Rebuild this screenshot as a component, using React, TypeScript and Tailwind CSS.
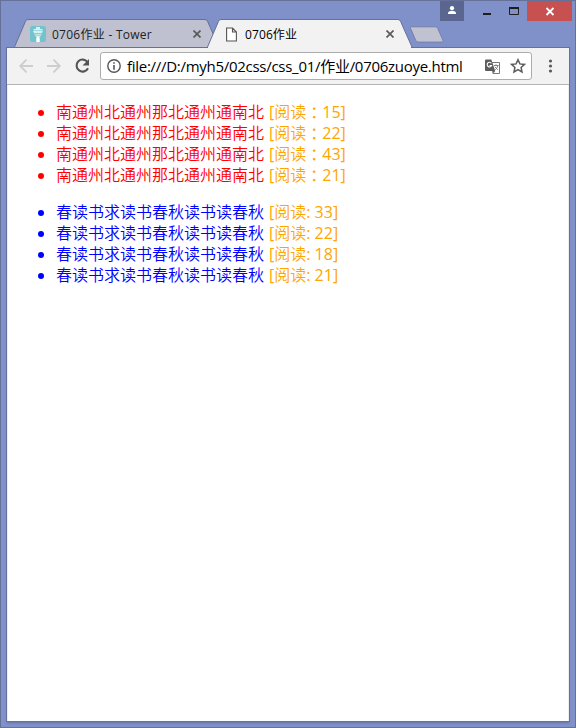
import React from "react";

const UI_FONT = "font-['Open_Sans','Noto_Sans_CJK_SC',sans-serif]";

type Item = { title: string; count: string };

const redItems: Item[] = ["15", "22", "43", "21"].map((count) => ({
  title: "南通州北通州那北通州通南北",
  count,
}));

const blueItems: Item[] = ["33", "22", "18", "21"].map((count) => ({
  title: "春读书求读书春秋读书读春秋",
  count,
}));

function WindowControls() {
  return (
    <div className="flex h-[18px] shrink-0 items-start justify-end pr-[3px]">
      <div className="flex h-5 w-6 shrink-0 justify-center bg-[#5a6690]">
        <svg width="24" height="20" viewBox="0 0 24 20" fill="#fff">
          <circle cx="12" cy="7.2" r="2.1" />
          <path d="M8 13v-1.2c0-1.3 2.6-2 4-2s4 .7 4 2V13z" />
        </svg>
      </div>
      <svg className="shrink-0" width="63" height="20" viewBox="0 0 63 20">
        <path d="M19 12h8v2h-8z" fill="#1e1e1e" />
        <path d="M45.5 7v6.5h9V7z" fill="none" stroke="#1e1e1e" />
        <path d="M45 6h10v2H45z" fill="#1e1e1e" />
      </svg>
      <div className="h-5 w-[45px] shrink-0 bg-[#c75050]">
        <svg width="45" height="20" viewBox="0 0 45 20">
          <path d="M19.500 7l7 7M26.500 7l-7 7" stroke="#fff" strokeWidth="1.800" />
        </svg>
      </div>
    </div>
  );
}

function CloseIcon() {
  return (
    <svg width="8" height="8" viewBox="0 0 8 8">
      <path d="M.5.5l7 7M7.500.5l-7 7" stroke="#5a5a5a" strokeWidth="1.700" />
    </svg>
  );
}

function TabShape({ active }: { active?: boolean }) {
  return (
    <svg className="absolute inset-0" width="206" height="29" viewBox="0 0 206 29">
      <path
        d="M.3 28.500L11.500 2.300Q12.300 .5 14 .5H191Q192.600 .5 193.500 2.300L205.200 28.500"
        fill={active ? "#f2f2f2" : "#c0c1d0"}
        stroke="#667098"
      />
      {active && <path d="M1 28h204v1H1z" fill="#f2f2f2" />}
    </svg>
  );
}

function TabStrip() {
  return (
    <div className={`flex h-[29px] shrink-0 pl-[13px] text-[12px] leading-[29px] text-[#222] ${UI_FONT}`}>
      <div className="relative h-[29px] w-[206px] shrink-0">
        <TabShape />
        <div className="relative flex h-[30px] items-center pl-4">
          <svg width="16" height="16" viewBox="0 0 16 16">
            <rect width="16" height="16" rx="2.500" fill="#72c3cb" />
            <path d="M6 1h4v2H6zM3.500 3h9v1.500h-9zM3 5h10l-1 2H4zM4 7.700h8l-.8 1.100H4.800zM5 9.500h6L10 11H6zM6 11.500h4V16H6z" fill="#d4f0f1" />
            <path d="M7 11h2v5H7z" fill="#fff" />
          </svg>
          <span className="ml-[6px] w-[141px] whitespace-nowrap tracking-[0.26px]">0706作业 - Tower</span>
          <CloseIcon />
        </div>
      </div>
      <div className="relative -ml-[13px] h-[29px] w-[206px] shrink-0">
        <TabShape active />
        <div className="relative flex h-[30px] items-center pl-[19px]">
          <svg width="11" height="15" viewBox="0 0 11 15" fill="#fff" stroke="#555" strokeWidth="1.100">
            <path d="M.6 1h5.900l3.900 4v9H.6zM6.500 1v4h3.900" />
          </svg>
          <span className="ml-2 w-[141px] whitespace-nowrap text-black tracking-[0.1px]">0706作业</span>
          <CloseIcon />
        </div>
      </div>
      <svg className="-ml-[5px] mt-[7px] shrink-0" width="37" height="17" viewBox="0 0 37 17">
        <path
          d="M3.500 .8h24q1.500 0 2.200 1.500l5.300 12q.7 1.800-1 1.800H10.500q-2 0-2.800-1.800l-5.200-12Q2 .8 3.500 .8z"
          fill="#c0c2d2"
          stroke="#7480ad"
        />
      </svg>
    </div>
  );
}

function TranslateIcon() {
  return (
    <svg className="shrink-0" width="15" height="15" viewBox="0 0 15 15">
      <path d="M6 3.500h8.500v11H8z" fill="#fff" stroke="#777" />
      <path d="M1 .5h5.300L10.200 12H1q-1 0-1-1V1.500Q0 .5 1 .5z" fill="#5c5c5c" />
      <path d="M6.400 4.300A2.300 2.300 0 1 0 6.600 6.500H4.500" fill="none" stroke="#fff" strokeWidth="1.100" />
      <path d="M9 6.500h4.500M11 5.300v1.200M12.800 6.500c-.3 2-1.400 3.300-2.500 4.200M9.800 7.800l3 3" fill="none" stroke="#777" strokeWidth=".9" />
      <path d="M8 12h2.200L8.500 14.500z" fill="#5c5c5c" />
    </svg>
  );
}

function Toolbar() {
  return (
    <div className="flex h-[37px] shrink-0 items-center border-b border-[#b4b4b4] bg-[#f2f2f2] pl-px">
      <svg className="shrink-0" width="92" height="36" viewBox="0 0 92 36" fill="none">
        <g stroke="#cecece" strokeWidth="1.900">
          <path d="M25 18H12.500M18.500 11.700L12.200 18l6.300 6.300" />
          <path d="M39 18h12.500M45.500 11.700l6.300 6.300-6.300 6.300" />
        </g>
        <path d="M79.500 14.100A6 6 0 1 0 80 20.200" stroke="#555" strokeWidth="2.100" />
        <path d="M81 11v6.500h-6.500z" fill="#555" />
      </svg>
      <div className="flex h-7 w-[432px] shrink-0 items-center rounded-[3px] border border-[#acacac] bg-white">
        <svg className="ml-[6px] shrink-0" width="14" height="14" viewBox="0 0 14 14">
          <circle cx="7" cy="7" r="6.200" fill="none" stroke="#555" strokeWidth="1.400" />
          <path d="M6.200 3.200h1.600v1.600H6.200zM6.200 6h1.600v4.800H6.200z" fill="#555" />
        </svg>
        <span className={`ml-[6px] w-[358px] shrink-0 whitespace-nowrap text-[15px] leading-[26px] tracking-[-0.28px] text-black ${UI_FONT}`}>
          file:///D:/myh5/02css/css_01/作业/0706zuoye.html
        </span>
        <TranslateIcon />
        <svg className="ml-[10px] shrink-0" width="16" height="16" viewBox="0 0 16 16">
          <path d="M8 1.700l1.900 4.200 4.600.5-3.400 3.100.9 4.500-4-2.300L4 14l.9-4.500L1.500 6.400l4.600-.5z" fill="none" stroke="#5c5c5c" strokeWidth="1.500" />
        </svg>
      </div>
      <svg className="ml-4 shrink-0" width="5" height="14" viewBox="0 0 5 14" fill="#5a5a5a">
        <circle cx="2.500" cy="2" r="1.600" />
        <circle cx="2.500" cy="7" r="1.600" />
        <circle cx="2.500" cy="12" r="1.600" />
      </svg>
    </div>
  );
}

function ReadingList({ items, color, wide }: { items: Item[]; color: string; wide?: boolean }) {
  return (
    <ul className={color}>
      {items.map((item, i) => (
        <li key={i} className="flex h-[21px] items-center whitespace-nowrap text-[16px] leading-[21px]">
          <span className="ml-[30px] mr-[12px] size-[6px] shrink-0 rounded-full bg-current" />
          <span className="w-[213px] font-['Liberation_Sans','Noto_Sans_CJK_SC',sans-serif] font-[350]">{item.title}</span>
          <span className="font-['Open_Sans','Noto_Sans_CJK_SC',sans-serif] font-normal text-[#ffa500]">
            [<span className="font-[350]">阅读</span>
            {wide ? <span className="relative top-px font-['Liberation_Sans','Noto_Sans_CJK_TC',sans-serif] font-normal">：</span> : ": "}
            {item.count}]
          </span>
        </li>
      ))}
    </ul>
  );
}

export default function App() {
  return (
    <div className="flex h-[728px] w-[576px] flex-col overflow-hidden border border-[#657199] bg-[#8090c8]">
      <WindowControls />
      <TabStrip />
      <div className="relative mx-[5px] -mt-px mb-[5px] flex min-h-0 flex-1 flex-col">
        <div className="flex h-px shrink-0">
          <div className="w-[202px] bg-[#66709c]" />
          <div className="w-[203px] bg-[#f2f2f2]" />
          <div className="flex-1 bg-[#66709c]" />
        </div>
        <div className="flex min-h-0 flex-1 flex-col border-x border-b border-[#64719f] shadow-[0_2px_2px_-1px_#6674a8]">
          <Toolbar />
          <main className="flex flex-1 flex-col gap-4 border-x border-[#eee] bg-white pt-[17px]">
            <ReadingList items={redItems} color="text-[#ff0000]" wide />
            <ReadingList items={blueItems} color="text-[#0000ff]" />
          </main>
        </div>
      </div>
    </div>
  );
}
